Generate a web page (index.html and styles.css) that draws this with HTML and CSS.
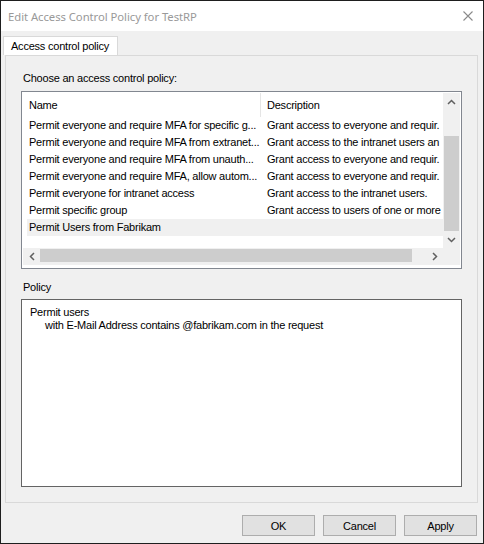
FILE: index.html
```html
<!DOCTYPE html>
<html>
<head>
<meta charset="utf-8">
<link rel="stylesheet" href="styles.css">
</head>
<body>
<div class="window">
  <div class="titlebar">
    <span class="title">Edit Access Control Policy for TestRP</span>
    <svg class="close" width="10" height="10" viewBox="0 0 10 10"><path d="M0.5 0.5 L9.5 9.5 M9.5 0.5 L0.5 9.5" stroke="#8a8a8a" stroke-width="1.1" fill="none"/></svg>
  </div>
  <div class="tabs">
    <div class="tab">Access control policy</div>
  </div>
  <div class="panel">
    <div class="label label-choose">Choose an access control policy:</div>
    <div class="listbox">
      <div class="list-main">
        <div class="list-view">
          <div class="list-header">
            <div class="hcell hname">Name</div>
            <div class="hsep"></div>
            <div class="hcell hdesc">Description</div>
          </div>
          <div class="row"><div class="cname">Permit everyone and require MFA for specific g...</div><div class="cdesc">Grant access to everyone and requir.</div></div>
          <div class="row"><div class="cname">Permit everyone and require MFA from extranet...</div><div class="cdesc">Grant access to the intranet users an</div></div>
          <div class="row"><div class="cname">Permit everyone and require MFA from unauth...</div><div class="cdesc">Grant access to everyone and requir.</div></div>
          <div class="row"><div class="cname">Permit everyone and require MFA, allow autom...</div><div class="cdesc">Grant access to everyone and requir.</div></div>
          <div class="row"><div class="cname">Permit everyone for intranet access</div><div class="cdesc">Grant access to the intranet users.</div></div>
          <div class="row"><div class="cname">Permit specific group</div><div class="cdesc">Grant access to users of one or more</div></div>
          <div class="row selected"><div class="cname">Permit Users from Fabrikam</div><div class="cdesc"></div></div>
        </div>
        <div class="vscroll">
          <div class="sbtn"><svg width="9" height="6" viewBox="0 0 9 6"><path d="M1 5 L4.5 1.5 L8 5" stroke="#606060" stroke-width="1.5" fill="none"/></svg></div>
          <div class="vtrack"><div class="vthumb"></div></div>
          <div class="sbtn"><svg width="9" height="6" viewBox="0 0 9 6"><path d="M1 1 L4.5 4.5 L8 1" stroke="#606060" stroke-width="1.5" fill="none"/></svg></div>
        </div>
      </div>
      <div class="list-bottom">
        <div class="hscroll">
          <div class="sbtn"><svg width="6" height="9" viewBox="0 0 6 9"><path d="M5 1 L1.5 4.5 L5 8" stroke="#606060" stroke-width="1.5" fill="none"/></svg></div>
          <div class="htrack"><div class="hthumb"></div></div>
          <div class="sbtn"><svg width="6" height="9" viewBox="0 0 6 9"><path d="M1 1 L4.5 4.5 L1 8" stroke="#606060" stroke-width="1.5" fill="none"/></svg></div>
        </div>
        <div class="corner"></div>
      </div>
    </div>
    <div class="label label-policy">Policy</div>
    <div class="policy-box">
      <div class="pline">Permit users</div>
      <div class="pline indent">with E-Mail Address contains @fabrikam.com in the request</div>
    </div>
  </div>
  <div class="buttons">
    <button class="btn">OK</button>
    <button class="btn">Cancel</button>
    <button class="btn">Apply</button>
  </div>
</div>
</body>
</html>
```

FILE: styles.css
```css
* { box-sizing: border-box; }
html, body { margin: 0; padding: 0; background: #f0f0f0; }
body {
  font-family: "Liberation Sans", Arial, sans-serif;
  font-size: 11px;
  letter-spacing: -0.22px;
  color: #000;
}
.window {
  width: 484px;
  height: 544px;
  border: 1px solid #1e1e1e;
  background: #f0f0f0;
  display: flex;
  flex-direction: column;
}
.titlebar {
  height: 30px;
  background: #fff;
  display: flex;
  align-items: center;
  justify-content: space-between;
  padding: 0 10px 0 7px;
  flex: none;
}
.title {
  font-family: "Noto Sans", "Open Sans", sans-serif;
  font-size: 11.3px;
  letter-spacing: -0.05px;
  color: #999;
}
.close { display: block; }
.tabs {
  display: flex;
  padding: 5px 0 0 2px;
  height: 24px;
  flex: none;
}
.tab {
  width: 115px;
  height: 19px;
  border: 1px solid #d9d9d9;
  border-bottom: none;
  background: #fff;
  padding-left: 7px;
  line-height: 18px;
}
.panel {
  margin: 0 5px 0 4px;
  height: 448px;
  border: 1px solid #d9d9d9;
  padding: 16px 15px 15px 15px;
  display: flex;
  flex-direction: column;
  flex: none;
}
.label { line-height: 13px; height: 13px; padding-left: 2px; }
.label-choose { margin-bottom: 6px; }
.label-policy { margin: 12px 0 5px; }
.listbox {
  height: 178px;
  border: 1px solid #828790;
  background: #fff;
  padding: 1px 1px 3px 1px;
  display: flex;
  flex-direction: column;
  flex: none;
}
.list-main {
  height: 155px;
  display: flex;
}
.list-view {
  flex: 1;
  overflow: hidden;
  white-space: nowrap;
}
.list-header {
  display: flex;
  height: 24px;
  line-height: 24px;
}
.hcell { overflow: hidden; }
.hname { width: 237px; padding-left: 6px; }
.hsep { width: 1px; background: #e5e5e5; height: 24px; }
.hdesc { flex: 1; padding-left: 6px; }
.row {
  display: flex;
  height: 17px;
  line-height: 17px;
  margin-left: 4px;
}
.row.selected { background: #f0f0f0; }
.cname { width: 233px; padding-left: 2px; overflow: hidden; flex: none; }
.cdesc { padding-left: 7px; flex: none; }
.vscroll {
  width: 17px;
  display: flex;
  flex-direction: column;
  background: #f0f0f0;
}
.sbtn {
  width: 17px;
  height: 17px;
  display: flex;
  align-items: center;
  justify-content: center;
  flex: none;
}
.vtrack { flex: 1; padding-top: 26px; display: flex; flex-direction: column; }
.vthumb { flex: 1; background: #cdcdcd; margin: 0 1px; }
.list-bottom { display: flex; height: 17px; }
.hscroll { flex: 1; display: flex; background: #f0f0f0; }
.htrack { flex: 1; padding-right: 14px; display: flex; }
.hthumb { flex: 1; background: #cdcdcd; margin: 1px 0 3px; }
.corner { width: 17px; background: #f0f0f0; }
.policy-box {
  flex: 1;
  border: 1px solid #646464;
  background: #fff;
  padding: 6px 8px;
}
.pline { line-height: 13px; white-space: nowrap; }
.indent { padding-left: 15px; }
.buttons {
  display: flex;
  justify-content: flex-end;
  gap: 8px;
  padding: 12px 6px 0 0;
}
.btn {
  width: 73px;
  height: 21px;
  border: 1px solid #adadad;
  background: #e1e1e1;
  font-family: "Liberation Sans", Arial, sans-serif;
  font-size: 11px;
  letter-spacing: -0.22px;
  color: #000;
  padding: 0;
  margin: 0;
}
```
